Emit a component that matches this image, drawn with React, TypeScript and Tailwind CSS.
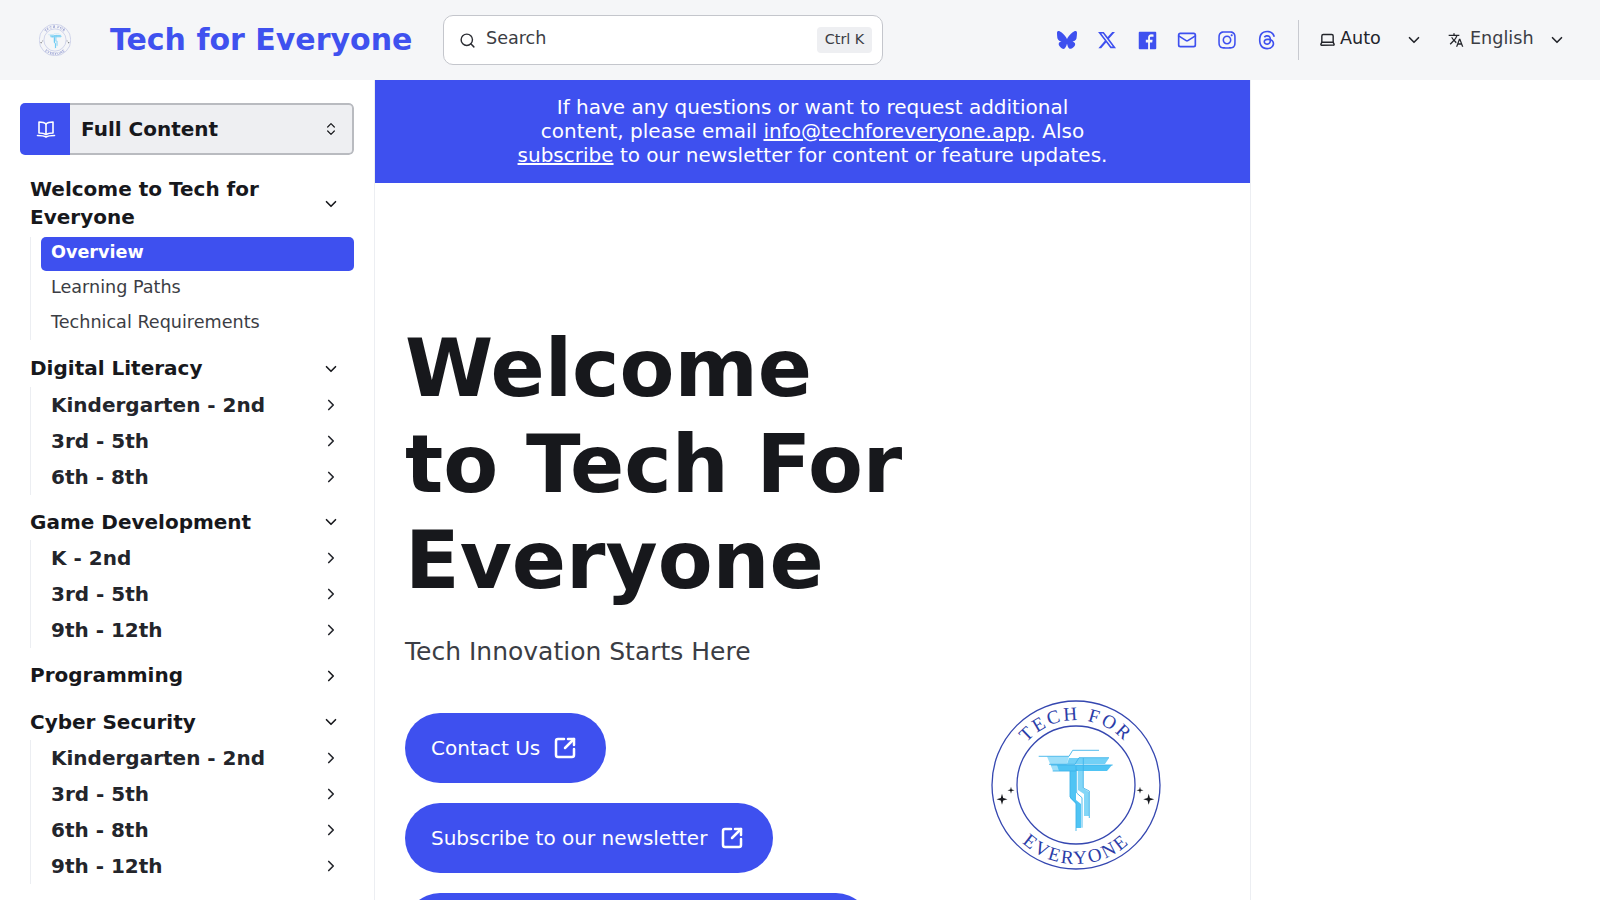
import { ChevronDown, ChevronRight, ChevronsUpDown, Laptop, Mail, Search, SquareArrowOutUpRight } from "lucide-react";
import { FaBluesky, FaInstagram, FaThreads, FaXTwitter } from "react-icons/fa6";
import { MdTranslate } from "react-icons/md";

function Logo({ className, small }: { className: string; small?: boolean }) {
  const id = small ? "s" : "l";
  return (
    <svg viewBox="0 0 170 170" className={className} overflow="visible">
      <defs>
        <path id={`top-${id}`} d="M 20 85 A 65 65 0 0 1 150 85" />
        <path id={`bot-${id}`} d="M 6 85 A 79 79 0 0 0 164 85" />
      </defs>
      <circle cx="85" cy="85" r="84" fill="none" stroke="#3547b0" strokeWidth="1.3" />
      <circle cx="85" cy="85" r="59" fill="none" stroke="#3547b0" strokeWidth="1.3" />
      <text fontFamily="'Liberation Serif', serif" fontSize="19" fill="#2b3da8" letterSpacing="2.6">
        <textPath href={`#top-${id}`} startOffset="50%" textAnchor="middle">TECH FOR</textPath>
      </text>
      <text fontFamily="'Liberation Serif', serif" fontSize="19" fill="#2b3da8" letterSpacing="2.2">
        <textPath href={`#bot-${id}`} startOffset="50%" textAnchor="middle">EVERYONE</textPath>
      </text>
      <g fill="#4fc4f4">
        <path d="M56 56.5 H78 L74 71 H62 Z" opacity="0.55" />
        <path d="M66 65 H121 L116 71 H68 Z" />
        <path d="M78 58 H118 L114 64 H76 Z" opacity="0.8" />
        <path d="M79 71 H85 V100 L90 104 V128 H85 V104 L79 98 Z" />
        <path d="M92 71 V88 L98 92 V116 H93 V94 L87 90 V71 Z" opacity="0.7" />
      </g>
      <g fill="none" stroke="#3fb4ea" strokeWidth="0.9">
        <path d="M47.7 56.3 H78 L81.7 50.3 H108" />
        <path d="M58 64.3 H84 L88 57.7 H118" />
        <path d="M60 65 H121.7" />
        <path d="M61.7 71 H85 V66" />
        <path d="M79 71 V97 L85 102.7 V131" />
        <path d="M92.3 58 V88 L98.3 91 V118" />
        <path d="M85.7 69 V93 L91 97.7 V127.7" />
      </g>
      <g fill="#16181d">
        <path d="M11 93.8 l1.2 4.3 l4.3 1.2 l-4.3 1.2 l-1.2 4.3 l-1.2 -4.3 l-4.3 -1.2 l4.3 -1.2 Z" />
        <path d="M20 86.8 l.7 2.8 l2.8 .7 l-2.8 .7 l-.7 2.8 l-.7 -2.8 l-2.8 -.7 l2.8 -.7 Z" />
        <path d="M157.7 93.8 l1.2 4.3 l4.3 1.2 l-4.3 1.2 l-1.2 4.3 l-1.2 -4.3 l-4.3 -1.2 l4.3 -1.2 Z" />
        <path d="M149 86.8 l.7 2.8 l2.8 .7 l-2.8 .7 l-.7 2.8 l-.7 -2.8 l-2.8 -.7 l2.8 -.7 Z" />
      </g>
    </svg>
  );
}

function OpenBook() {
  return (
    <svg viewBox="0 0 20 20" className="ml-[2px] h-[20px] w-[20px]" fill="none" stroke="white" strokeWidth="1.6" strokeLinejoin="round" strokeLinecap="round">
      <path d="M10 5 C8.5 3.5 6 3 3 3 V14 C6 14 8.5 14.5 10 15.5 C11.5 14.5 14 14 17 14 V3 C14 3 11.5 3.5 10 5 Z" />
      <path d="M10 5 V15.5" />
      <path d="M1.5 16.5 C5 16.5 8 16.8 10 18 C12 16.8 15 16.5 18.5 16.5" />
    </svg>
  );
}

function Facebook() {
  return (
    <svg viewBox="0 0 24 24" className="h-[21px] w-[21px]" fill="currentColor">
      <path d="M20.9 2H3.1A1.1 1.1 0 0 0 2 3.1v17.8A1.1 1.1 0 0 0 3.1 22h9.58v-7.75h-2.6v-3h2.6V9a3.64 3.64 0 0 1 3.88-4 20.26 20.26 0 0 1 2.33.12v2.7H16.3c-1.26 0-1.5.6-1.5 1.47v1.93h3l-.39 3H14.8V22h6.1a1.1 1.1 0 0 0 1.1-1.1V3.1A1.1 1.1 0 0 0 20.9 2Z" />
    </svg>
  );
}

const SectionHead = ({ children, open }: { children: React.ReactNode; open?: boolean }) => (
  <div className="flex items-center justify-between pl-[10px] pr-[14px] text-[20px] leading-[27.5px] font-bold text-[#17181c]">
    <span className="w-[270px]">{children}</span>
    {open ? <ChevronDown className="h-[18px] w-[18px]" strokeWidth={2.2} /> : <ChevronRight className="h-[18px] w-[18px]" strokeWidth={2.2} />}
  </div>
);

const SubItems = ({ items }: { items: string[] }) => (
  <ul className="ml-[10px] mt-[4px] border-l border-[#eceef2]">
    {items.map((t) => (
      <li key={t} className="flex h-[36px] items-center justify-between pl-[20px] pr-[14px] text-[20px] font-bold text-[#23252b]">
        {t}
        <ChevronRight className="h-[18px] w-[18px]" strokeWidth={2.2} />
      </li>
    ))}
  </ul>
);

const Cta = ({ children, w }: { children?: React.ReactNode; w: string }) => (
  <div className={`flex h-[70px] items-center gap-[13px] rounded-full bg-[#3e50ef] pl-[26px] text-[20px] text-white ${w}`}>
    {children}
    {children ? <SquareArrowOutUpRight className="h-[24px] w-[24px]" strokeWidth={2.5} /> : null}
  </div>
);

export default function App() {
  return (
    <div className="flex h-screen w-full flex-col overflow-hidden bg-white font-['DejaVu_Sans',sans-serif] text-[#23252b]">
      <header className="flex h-[80px] shrink-0 items-center bg-[#f5f6f8] pl-[39px] pr-[20px]">
        <Logo small className="h-[32px] w-[32px] shrink-0 opacity-80 blur-[0.4px]" />
        <div className="ml-[39px] w-[333px] shrink-0 pb-[2px] text-[30px] font-bold text-[#3f51ef]">Tech for Everyone</div>
        <div className="flex h-[50px] w-[440px] shrink-0 items-center rounded-[10px] border border-[#c4c6cc] bg-white pl-[15px] pr-[10px]">
          <Search className="h-[17px] w-[17px] text-[#2b2d33]" strokeWidth={2} />
          <span className="ml-[10px] flex-1 pb-[3px] text-[17.6px] text-[#3b3d44]">Search</span>
          <span className="flex h-[26px] w-[55px] items-center justify-center rounded-[4px] bg-[#eeeff2] text-[14.4px] text-[#3b3d44]">Ctrl K</span>
        </div>
        <div className="ml-[174px] flex w-[220px] shrink-0 items-center justify-between text-[#3e50ef]">
          <FaBluesky className="h-[20px] w-[20px]" />
          <FaXTwitter className="h-[20px] w-[20px]" />
          <Facebook />
          <Mail className="h-[20px] w-[20px]" strokeWidth={2} />
          <FaInstagram className="h-[20px] w-[20px]" />
          <FaThreads className="h-[20px] w-[20px]" />
        </div>
        <div className="ml-[21px] h-[40px] w-px shrink-0 bg-[#c8cad0]" />
        <div className="ml-[20px] flex w-[110px] shrink-0 items-center">
          <Laptop className="h-[17px] w-[17px]" strokeWidth={2} />
          <span className="ml-[4px] pb-[3px] text-[17.6px]">Auto</span>
          <ChevronDown className="ml-[24px] h-[18px] w-[18px]" strokeWidth={2.2} />
        </div>
        <div className="ml-[19px] flex shrink-0 items-center">
          <MdTranslate className="h-[16px] w-[16px]" />
          <span className="ml-[6px] pb-[3px] text-[17.6px] text-[#3b3d44]">English</span>
          <ChevronDown className="ml-[14px] h-[18px] w-[18px]" strokeWidth={2.2} />
        </div>
      </header>

      <div className="flex min-h-0 flex-1">
        <aside className="w-[375px] shrink-0 border-r border-[#eceef2] pl-[20px] pr-[20px] pt-[23px]">
          <div className="flex h-[52px] w-[334px] overflow-hidden rounded-[5px]">
            <div className="flex w-[50px] items-center justify-center bg-[#3e50ef]"><OpenBook /></div>
            <div className="flex flex-1 items-center justify-between rounded-r-[5px] border-2 border-l-0 border-[#b9bbc0] bg-[#eeeff2] pl-[11px] pr-[13px] text-[20px] font-bold text-[#17181c]">
              Full Content
              <ChevronsUpDown className="h-[16px] w-[16px]" strokeWidth={1.8} />
            </div>
          </div>

          <nav className="mt-[21px] w-[334px]">
            <SectionHead open>Welcome to Tech for Everyone</SectionHead>
            <ul className="ml-[10px] mt-[6px] border-l border-[#eceef2] pl-[10px] text-[17.6px] leading-[33px]">
              <li className="h-[34px] rounded-[5px] bg-[#3e50ef] pl-[10px] leading-[31px] font-bold text-white">Overview</li>
              <li className="h-[35px] pl-[10px] text-[#3b3d44]">Learning Paths</li>
              <li className="h-[34px] pl-[10px] text-[#3b3d44]">Technical Requirements</li>
            </ul>

            <div className="mt-[15px]"><SectionHead open>Digital Literacy</SectionHead></div>
            <SubItems items={["Kindergarten - 2nd", "3rd - 5th", "6th - 8th"]} />

            <div className="mt-[14px]"><SectionHead open>Game Development</SectionHead></div>
            <SubItems items={["K - 2nd", "3rd - 5th", "9th - 12th"]} />

            <div className="mt-[14px]"><SectionHead>Programming</SectionHead></div>

            <div className="mt-[19px]"><SectionHead open>Cyber Security</SectionHead></div>
            <SubItems items={["Kindergarten - 2nd", "3rd - 5th", "6th - 8th", "9th - 12th"]} />
          </nav>
        </aside>

        <main className="w-[876px] shrink-0 border-r border-[#eceef2]">
          <div className="h-[103px] bg-[#3e50ef] pt-[15px] text-center text-[20px] leading-[24px] text-white">
            If have any questions or want to request additional<br />
            content, please email <span className="underline">info@techforeveryone.app</span>. Also<br />
            <span className="underline">subscribe</span> to our newsletter for content or feature updates.
          </div>
          <div className="flex pl-[30px] pt-[138px]">
            <div className="w-[560px] shrink-0">
              <h1 className="text-[80px] leading-[96px] font-bold text-[#17181c]">
                Welcome<br />to Tech For<br />Everyone
              </h1>
              <p className="mt-[27px] text-[25px] leading-[32px] text-[#3b3d44]">Tech Innovation Starts Here</p>
              <div className="mt-[45px] flex flex-col gap-[20px]">
                <Cta w="w-[201px]">Contact Us</Cta>
                <Cta w="w-[368px]">Subscribe to our newsletter</Cta>
                <Cta w="w-[466px]" />
              </div>
            </div>
            <div className="pl-[26px] pt-[379px]">
              <Logo className="h-[170px] w-[170px]" />
            </div>
          </div>
        </main>
        <div className="flex-1 bg-white" />
      </div>
    </div>
  );
}
